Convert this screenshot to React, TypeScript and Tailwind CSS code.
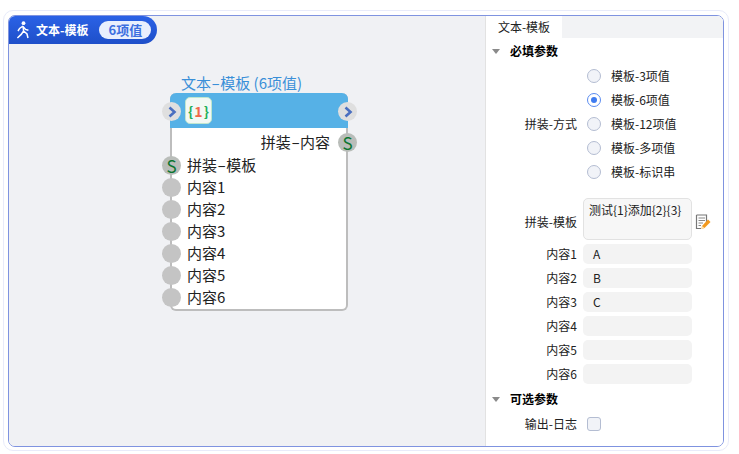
const font = { fontFamily: '"Noto Sans CJK SC", "Noto Sans", sans-serif' }

const radios = ['模板-3项值', '模板-6项值', '模板-12项值', '模板-多项值', '模板-标识串']
const inputs = [
  ['内容1', 'A'],
  ['内容2', 'B'],
  ['内容3', 'C'],
  ['内容4', ''],
  ['内容5', ''],
  ['内容6', ''],
]
const ports = ['内容1', '内容2', '内容3', '内容4', '内容5', '内容6']

function Chevron() {
  return (
    <svg width="10" height="12" viewBox="0 0 10 12">
      <path d="M2.5 1.5 L7.5 6 L2.5 10.5" fill="none" stroke="#4a6fc0" strokeWidth="2.6" />
    </svg>
  )
}

function Walker() {
  return (
    <svg width="16" height="18" viewBox="0 0 16 18" className="shrink-0">
      <circle cx="8.5" cy="2.2" r="1.9" fill="#fff" />
      <path
        d="M8 5 L4.6 7.4 L3 10 M8 5 L8.6 10 L12 13 L13 17 M8.6 10 L6.2 13.4 L2.4 17 M8.4 6 L10.6 8.4 L13.4 9.2"
        fill="none"
        stroke="#fff"
        strokeWidth="1.5"
      />
    </svg>
  )
}

function EditIcon() {
  return (
    <svg width="16" height="16" viewBox="0 0 16 16" className="shrink-0">
      <path d="M1.5 1 H11.5 V8 M1.5 1 V14.5 H6" fill="none" stroke="#777" strokeWidth="1.2" />
      <path d="M3.5 4 H10 M3.5 6.5 H10 M3.5 9 H8 M3.5 11.5 H6" stroke="#888" strokeWidth="1" />
      <path d="M7 12 L13 5.5 L15.5 8 L9.5 14 L6.5 15 Z" fill="#f39a1f" />
      <path d="M7 12 L6.5 15 L9.5 14 Z" fill="#fde3b0" />
    </svg>
  )
}

function Caret() {
  return <span className="h-0 w-0 border-x-[4px] border-t-[5px] border-x-transparent border-t-[#8a8a8a]" />
}

function Dash() {
  return <span className="mx-[2px] inline-block scale-x-[1.7]">-</span>
}

function SectionTitle({ text }: { text: string }) {
  return (
    <div className="flex h-6 items-center pl-[6px]">
      <Caret />
      <span className="ml-[10px] text-[12px] font-bold text-black">{text}</span>
    </div>
  )
}

function Port({ s }: { s?: boolean }) {
  return (
    <span
      className={
        s
          ? 'flex h-[19px] w-[19px] shrink-0 items-center justify-center rounded-full bg-[#b9bdb9] text-[17px] leading-none text-[#0b7530]'
          : 'h-[19px] w-[19px] shrink-0 rounded-full bg-[#c4c4c4]'
      }
    >
      {s ? 'S' : ''}
    </span>
  )
}

function FlowNode() {
  return (
    <div className="absolute left-[153px] top-[57px] w-[195px] text-[15px] text-[#222]">
      <div className="ml-[19px] h-[20px] text-[15px] leading-[20px] text-[#3a8fd8]">
        文本<Dash />模板 (6项值)
      </div>
      <div className="relative ml-[8px] h-[218px] w-[178px] rounded-[6px] border-x-2 border-b-2 border-[#bdbdbd] bg-white">
        <div className="absolute -left-[2px] -right-[2px] top-0 flex h-[35px] items-center rounded-t-[6px] bg-[#56b1e6] pl-[15px]">
          <span className="flex h-[27px] w-[27px] items-center justify-center rounded-[5px] border border-[#bfe6cf] bg-[#f2f8f4] text-[14px] font-bold leading-none">
            <span className="text-[#1fae5a]">{'{'}</span>
            <span className="px-[1px] text-[#f0694a]">1</span>
            <span className="text-[#1fae5a]">{'}'}</span>
          </span>
        </div>
      </div>
      <span className="absolute left-0 top-[29px] flex h-[19px] w-[19px] items-center justify-center rounded-full bg-[#dfdfdf]">
        <Chevron />
      </span>
      <span className="absolute left-[176px] top-[29px] flex h-[19px] w-[19px] items-center justify-center rounded-full bg-[#dfdfdf]">
        <Chevron />
      </span>
      <div className="absolute left-0 right-0 top-[58px] flex h-[22px] items-center justify-end gap-[8px]">
        <span>
          拼装<Dash />内容
        </span>
        <Port s />
      </div>
      <div className="absolute left-0 top-[81px] flex flex-col">
        <div className="flex h-[22px] items-center gap-[6px]">
          <Port s />
          <span>
            拼装<Dash />模板
          </span>
        </div>
        {ports.map((p) => (
          <div key={p} className="flex h-[22px] items-center gap-[6px]">
            <Port />
            <span>{p}</span>
          </div>
        ))}
      </div>
    </div>
  )
}

function Radio({ on }: { on?: boolean }) {
  return (
    <span
      className={
        on
          ? 'flex h-[14px] w-[14px] items-center justify-center rounded-full border-[1.5px] border-[#5b8cf0] bg-white'
          : 'h-[14px] w-[14px] rounded-full border-[1.5px] border-[#b4bdd2] bg-[#f1f3f8]'
      }
    >
      {on && <span className="h-[6px] w-[6px] rounded-full bg-[#3f7cf0]" />}
    </span>
  )
}

function Panel() {
  return (
    <div className="flex w-[238px] shrink-0 flex-col border-l border-[#e2e2e2] bg-white text-[12px] text-[#222]">
      <div className="h-[22px] shrink-0 bg-[#f2f3f5]">
        <div className="flex h-[22px] w-[76px] items-center justify-center bg-white">文本-模板</div>
      </div>
      <div className="mt-[1px]">
        <SectionTitle text="必填参数" />
      </div>
      <div className="mt-[1px] flex">
        <div className="flex w-[91px] shrink-0 items-center justify-end">拼装-方式</div>
        <div className="ml-[10px] flex flex-col">
          {radios.map((r, i) => (
            <div key={r} className="flex h-6 items-center gap-[10px]">
              <Radio on={i === 1} />
              <span>{r}</span>
            </div>
          ))}
        </div>
      </div>
      <div className="mt-[14px] flex">
        <div className="flex w-[91px] shrink-0 items-center justify-end pt-[6px]">拼装-模板</div>
        <div className="ml-[6px] h-[42px] w-[109px] rounded-[5px] border border-[#e2e2e2] bg-[#f7f7f7] px-[5px] py-[2px] leading-[18px]">
          测试{'{1}'}添加{'{2}'}{'{3}'}
        </div>
        <div className="ml-[3px] flex items-center pt-[6px]">
          <EditIcon />
        </div>
      </div>
      <div className="mt-[4px] flex flex-col gap-1">
        {inputs.map(([label, value]) => (
          <div key={label} className="flex h-5 items-center">
            <div className="w-[91px] shrink-0 text-right">{label}</div>
            <div className="ml-[6px] flex h-5 w-[109px] items-center rounded-[5px] bg-[#f3f3f3] pl-[10px]">{value}</div>
          </div>
        ))}
      </div>
      <div className="mt-[3px]">
        <SectionTitle text="可选参数" />
      </div>
      <div className="mt-[1px] flex h-6 items-center">
        <div className="w-[91px] shrink-0 text-right">输出-日志</div>
        <span className="ml-[10px] h-[14px] w-[14px] rounded-[3px] border-[1.5px] border-[#b4bdd2] bg-[#f1f3f8]" />
      </div>
    </div>
  )
}

export default function App() {
  return (
    <div className="h-[454px] w-[739px] bg-white pl-[3px] pt-[10px]" style={font}>
      <div className="h-[441px] w-[726px] rounded-[10px] border border-[#e8ebfa] p-[4px]">
        <div className="flex h-[432px] w-[716px] overflow-hidden rounded-[7px] border border-[#7f93e0]">
          <div className="relative min-w-0 flex-1 bg-[#f0f1f4]">
            <div className="flex h-[28px] w-[148px] items-center rounded-r-[14px] bg-gradient-to-b from-[#2b62e6] to-[#1e4fc9] pl-[6px] text-white">
              <Walker />
              <span className="ml-[5px] text-[12px] font-bold">文本-模板</span>
              <span className="ml-[11px] flex h-[18px] w-[52px] items-center justify-center rounded-full bg-[#e9effd] text-[13px] font-bold text-[#3d6fe0]">
                6项值
              </span>
            </div>
            <FlowNode />
          </div>
          <Panel />
        </div>
      </div>
    </div>
  )
}
